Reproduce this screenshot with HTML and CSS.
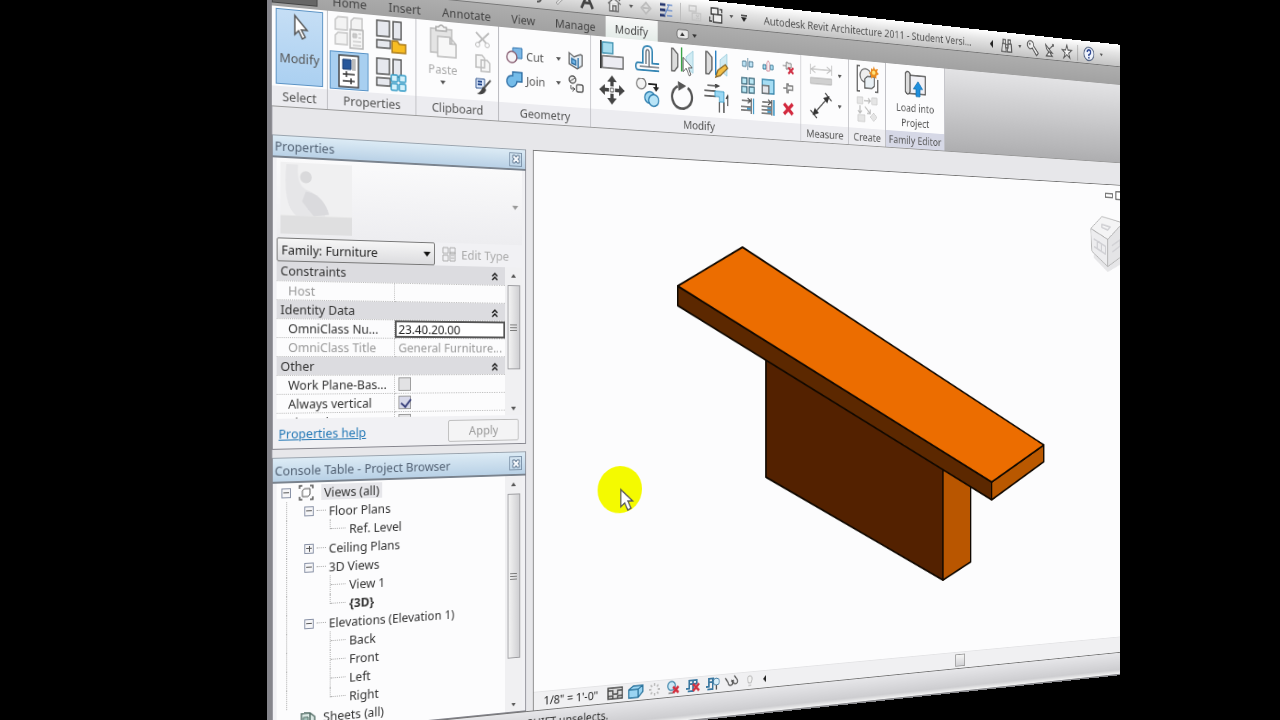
FILE: index.html
```html
<!DOCTYPE html>
<html lang="en">
<head>
<meta charset="utf-8">
<title>Autodesk Revit Architecture 2011 - Student Version</title>
<link rel="stylesheet" href="styles.css">
</head>
<body>
<main class="frame">
<div class="window">
  <header class="titlebar">
    <nav class="quick" aria-label="Quick access">
      <svg class="i16 wide" viewBox="0 0 16 16"><path d="M2 5h7q5 0 5 4t-5 4M6 1 2 5l4 4" fill="none" stroke="#555" stroke-width="2"/></svg>
      <svg class="i16 wide" viewBox="0 0 16 16"><path d="M2 12 12 2l2 2L4 14z" fill="#ddd" stroke="#999"/></svg>
      <svg class="i20 wide" viewBox="0 0 20 20"><path d="M3 17 10 2l7 15M6 11h8" fill="none" stroke="#444" stroke-width="3"/></svg>
      <svg class="i20" viewBox="0 0 20 20"><path d="M2 9 9 3l9 6M4 8v9h11V8M8 17v-6h4v6M14 2l3 3" fill="#eee" stroke="#666" stroke-width="1.5"/></svg>
      <span class="caret"></span>
      <svg class="i16" viewBox="0 0 16 16"><path d="M8 2l6 6-6 6-6-6zM4 8h8" fill="#ddd" stroke="#bbb" stroke-width="2"/></svg>
      <svg class="i20" viewBox="0 0 20 20"><path d="M2 4h7M2 10h7M2 16h7" stroke="#25366f" stroke-width="3"/><path d="M11 4h7M11 10h7M11 16h7M8 16l6-13" stroke="#6c8fcb" stroke-width="1.5"/></svg>
      <span class="rule"></span>
      <svg class="i20" viewBox="0 0 20 20"><path d="M3 2h9v6H3zM7 10h11v8H7zM12 12l4 4m0-4-4 4" fill="none" stroke="#c2c2c2" stroke-width="1.5"/></svg>
      <svg class="i20" viewBox="0 0 20 20"><path d="M4 2h9v7H4zM7 9h11v9H7zM15 3h3v4M2 12v5h3" fill="#eee" stroke="#333" stroke-width="1.5"/></svg>
      <span class="caret"></span>
      <svg class="i12" viewBox="0 0 12 12"><path d="M2 3h8" stroke="#222" stroke-width="1.500"/><path d="M2 5h8l-4 5z" fill="#222"/></svg>
    </nav>
    <h1 class="doc-title">Autodesk Revit Architecture 2011 - Student Versi...</h1>
    <div class="info">
      <svg class="i12" viewBox="0 0 12 12"><path d="M8 1v10L3 6z" fill="#222"/></svg>
      <svg class="i20" viewBox="0 0 20 20"><path d="M4 3h4v5H4zM12 3h4v5h-4zM3 8h5l1 10H2zM12 8h5l1 10h-7zM8 9h4v4H8z" fill="#ddd" stroke="#555" stroke-width="1.5"/></svg>
      <span class="caret"></span>
      <svg class="i20" viewBox="0 0 20 20"><path d="M9 10a5 5 0 1 1 2-3l8 9-3 3z" fill="#eee" stroke="#555" stroke-width="1.5"/><circle cx="5" cy="5" r="1.5" fill="#777"/></svg>
      <svg class="i20" viewBox="0 0 20 20"><path d="M3 4q1 9 11 10zM8 13l-4 5h10l-4-4M9 9l6-5" fill="#eee" stroke="#555" stroke-width="1.5"/><circle cx="15" cy="4" r="2" fill="#666"/></svg>
      <svg class="i20" viewBox="0 0 20 20"><path d="m10 2 2 6h6l-5 4 2 6-5-4-5 4 2-6-5-4h6z" fill="#f4f4f4" stroke="#555" stroke-width="1.5"/></svg>
      <span class="rule dark"></span>
      <svg class="i20" viewBox="0 0 20 20"><circle cx="10" cy="10" r="8.500" fill="#eef2fb" stroke="#51617f" stroke-width="1.5"/><path d="M7 8q0-3 3-3t3 3q0 2-3 3v2M10 14v2" fill="none" stroke="#2a4593" stroke-width="2"/></svg>
      <span class="caret"></span>
    </div>
  </header>

  <nav class="tabs" aria-label="Ribbon tabs">
    <button class="app-button" aria-label="Application menu"></button>
    <button class="tab">Home</button>
    <button class="tab">Insert</button>
    <button class="tab">Annotate</button>
    <button class="tab">View</button>
    <button class="tab">Manage</button>
    <button class="tab active">Modify</button>
    <svg class="ribbon-toggle" viewBox="0 0 28 12"><rect x="1" y="1" width="15" height="10" rx="3" fill="#e8e8e8" stroke="#666"/><path d="M5 8h6L8 4z" fill="#333"/><path d="M21 5h6l-3 4z" fill="#333"/></svg>
  </nav>

  <section class="ribbon">
    <div class="panel select">
      <div class="tools"><button class="modify-button">
        <svg class="i32" viewBox="0 0 32 32"><path d="M11 5v19l4-4 4 8 3-2-4-7h6z" fill="#fff" stroke="#555" stroke-width="1.5"/></svg>
        <span>Modify</span></button></div>
      <h2>Select</h2>
    </div>
    <div class="panel properties">
      <div class="tools grid2">
        <button class="tool"><svg class="i36" viewBox="0 0 36 36"><path d="M3 5l3-3h10v13H3zM20 5l3-3h9v12H20zM3 21l3-3h10v12H3z" fill="#f3f3f3" stroke="#c5c5c5" stroke-width="1.5"/><path d="M19 14h14v19H19z" fill="#f5f5f5" stroke="#b5b5b5" stroke-width="1.5"/><path d="M22 18h4v4h-4zM28 18h3M28 22h3M22 26h9M22 30h9" stroke="#bbb" fill="#ccc"/></svg></button>
        <button class="tool"><svg class="i36" viewBox="0 0 36 36"><path d="M2 2h14v16H2zM20 2h9v18h-9zM2 22h15v8H2z" fill="#e6e8ee" stroke="#555" stroke-width="1.500"/><path d="M19 22h6l2 3h7v9H19z" fill="#f8bd22" stroke="#a9791a" stroke-width="1.5"/></svg></button>
        <button class="tool on"><svg class="i36" viewBox="0 0 36 36"><rect x="7" y="2" width="21" height="32" fill="#fff" stroke="#444" stroke-width="1.500"/><path d="M11 6h9v10h-9z" fill="#26569a" stroke="#173b70"/><path d="M21 5h4v12h-4z" fill="#bbb"/><path d="M11 21h13M11 28h13M15 18v6M20 25v6" stroke="#333" stroke-width="1.500"/></svg></button>
        <button class="tool"><svg class="i36" viewBox="0 0 36 36"><path d="M2 2h14v16H2zM20 2h9v18h-9zM2 22h15v8H2z" fill="#e6e8ee" stroke="#555" stroke-width="1.500"/><rect x="18" y="18" width="7" height="7" rx="1" fill="#d4f1fb" stroke="#3199c5" stroke-width="1.500"/><rect x="27" y="18" width="7" height="7" rx="1" fill="#d4f1fb" stroke="#3199c5" stroke-width="1.500"/><rect x="18" y="27" width="7" height="7" rx="1" fill="#d4f1fb" stroke="#3199c5" stroke-width="1.500"/><rect x="27" y="27" width="7" height="7" rx="1" fill="#d4f1fb" stroke="#3199c5" stroke-width="1.500"/></svg></button>
      </div>
      <h2>Properties</h2>
    </div>
    <div class="panel clipboard">
      <div class="tools split">
        <button class="big faded"><svg class="i36" viewBox="0 0 36 36"><path d="M4 6h24v25H4z" fill="#e4e4e4" stroke="#bbb" stroke-width="1.500"/><path d="M10 8V4h3q3-4 6 0h3v4z" fill="#f4f4f4" stroke="#aaa" stroke-width="1.500"/><path d="M12 14h14l7 7v14H12zM26 14v7h7" fill="#f7f7f7" stroke="#bbb" stroke-width="1.500"/></svg><span>Paste</span><span class="caret"></span></button>
        <div class="stack">
          <svg class="i20" viewBox="0 0 20 20"><path d="m2 3 12 11M17 3 5 14" stroke="#bbb" stroke-width="2"/><circle cx="4" cy="16" r="2.500" fill="none" stroke="#bbb"/><circle cx="15" cy="16" r="2.500" fill="none" stroke="#bbb"/></svg>
          <svg class="i20" viewBox="0 0 20 20"><path d="M2 2h7l3 3v10H2zM8 7h7l3 3v9H8z" fill="#f7f7f7" stroke="#bbb" stroke-width="1.500"/></svg>
          <svg class="i20" viewBox="0 0 20 20"><path d="M2 2h10v10H2z" fill="#dce8fa" stroke="#31548d"/><path d="M4 5h5M4 8h5" stroke="#23478c" stroke-width="2"/><path d="m19 3-8 9" stroke="#555" stroke-width="2"/><path d="m10 10 4 3q-2 7-11 5 5-2 7-8z" fill="#444"/></svg>
        </div>
      </div>
      <h2>Clipboard</h2>
    </div>
    <div class="panel geometry">
      <div class="tools geo">
        <button class="inline"><svg class="i20" viewBox="0 0 20 20"><path d="M8 2h11v11H8z" fill="#7db8e6" stroke="#3374ad"/><circle cx="7" cy="12" r="6" fill="#f7f4f7" stroke="#885e72" stroke-width="1.500"/></svg>Cut<span class="caret"></span></button>
        <svg class="i20" viewBox="0 0 20 20"><path d="M2 2l6 4 8-3 2 1v11l-6 4-10-5z" fill="#e4edf4" stroke="#666" stroke-width="1.500"/><path d="M5 8l5 2v5l-5-2zM13 7v11" fill="#70b5e7" stroke="#2e6fa3" stroke-width="1.500"/></svg>
        <button class="inline"><svg class="i20" viewBox="0 0 20 20"><path d="M8 2h11v10h-6a6 6 0 1 1-7-6h2z" fill="#75bce9" stroke="#2d6ca3" stroke-width="1.500"/></svg>Join<span class="caret"></span></button>
        <svg class="i20" viewBox="0 0 20 20"><circle cx="6" cy="5" r="4" fill="#eee" stroke="#555" stroke-width="1.500"/><path d="m3 7 6-4M4 11v4h4M6 13l3 2-3 3" fill="none" stroke="#444"/><rect x="11" y="10" width="8" height="8" rx="2" fill="#f5f5f5" stroke="#555" stroke-width="1.500"/></svg>
      </div>
      <h2>Geometry</h2>
    </div>
    <div class="panel modify">
      <div class="tools mod">
        <div class="big-grid">
          <svg class="i32" viewBox="0 0 32 32"><path d="M2 0v31" stroke="#333" stroke-width="2"/><path d="M4 2h13v12H4z" fill="#a7dcee" stroke="#3b8eae" stroke-width="1.500"/><path d="M4 17h26v13H4z" fill="#ececf2" stroke="#666" stroke-width="1.500"/></svg>
          <svg class="i32" viewBox="0 0 32 32"><path d="M31 29H4q-3 0-3-4t3-4h6V8q0-6 6-6t6 6v13h9" fill="none" stroke="#3586b4" stroke-width="2"/><path d="M31 25H6M14 22V9q0-3 2-3t2 3v16" fill="none" stroke="#6a7078" stroke-width="1.500"/></svg>
          <svg class="i32" viewBox="0 0 32 32"><path d="M2 2h2l6 6v14l-4 5H2z" fill="#ddd" stroke="#555" stroke-width="1.500"/><path d="M15 0v27" stroke="#3aa447" stroke-width="2"/><path d="m30 3-9 7v12l9 6z" fill="#d0ebf3" stroke="#9dcddd"/><path d="M17 11v16l4-4 4 8 2-1-3-8h5z" fill="#fff" stroke="#444"/></svg>
          <svg class="i32" viewBox="0 0 32 32"><path d="M2 2h2l6 6v14l-4 5H2z" fill="#ddd" stroke="#555" stroke-width="1.500"/><path d="M15 0v28" stroke="#2b81c2" stroke-width="2"/><path d="m30 3-9 7v12l9 6z" fill="#d0ebf3" stroke="#9dcddd"/><path d="m15 30 3-8 10-7 3 4-10 9z" fill="#f4bf45" stroke="#8a692a" stroke-width="1.500"/></svg>
          <svg class="i32" viewBox="0 0 32 32"><path d="M16 0l6 7h-4v5h-4V7h-4zM16 32l6-7h-4v-5h-4v5h-4zM0 16l7-6v4h5v4H7v4zM32 16l-7-6v4h-5v4h5v4z" fill="#444"/><path d="M14 14h4v4h-4z" fill="#fff" stroke="#444"/></svg>
          <svg class="i32" viewBox="0 0 32 32"><circle cx="8" cy="6" r="6" fill="#f3f3f3" stroke="#777" stroke-width="1.500"/><path d="M17 6h10v4" stroke="#222" stroke-width="2" fill="none"/><path d="M23 9h8l-4 5z" fill="#222"/><circle cx="19" cy="21" r="6.500" fill="#a0d8f2" stroke="#2a7cae" stroke-width="1.500"/><circle cx="24" cy="24" r="6.500" fill="#b9e4f7" stroke="#2a7cae" stroke-width="1.500"/></svg>
          <svg class="i32" viewBox="0 0 32 32"><path d="M23 7a13 13 0 1 1-13-1" fill="none" stroke="#555" stroke-width="3"/><path d="M10 0l11 5-10 6z" fill="#555"/></svg>
          <svg class="i32" viewBox="0 0 32 32"><path d="M4 2h15M14 0l5 2-5 2M31 12v12M29 16l2-4 2 4" fill="none" stroke="#444" stroke-width="1.500"/><path d="M0 8h15M0 14h15M20 20v12M26 20v12" stroke="#666" stroke-width="2"/><path d="M14 8h12v12h-6v-6h-6z" fill="#9bd8f4" stroke="#3c9ac3"/></svg>
        </div>
        <div class="small-grid">
          <svg class="i16" viewBox="0 0 16 16"><path d="M1 5h5v6H1zM10 5h5v6h-5zM8 1v14" fill="#bfe4f5" stroke="#45738d"/></svg>
          <svg class="i16" viewBox="0 0 16 16"><path d="M1 7h4v5H1zM11 7h4v5h-4z" fill="#aee0f5" stroke="#2f718e"/><path d="M6 5l2-3 2 3v9H6z" fill="#faecef" stroke="#cc8795"/></svg>
          <svg class="i16" viewBox="0 0 16 16"><path d="M0 6h5M5 2v8h2V8h5V3H7V2z" fill="#eee" stroke="#777"/><path d="m8 8 7 7m0-7-7 7" stroke="#d03246" stroke-width="2.500"/></svg>
          <svg class="i20" viewBox="0 0 20 20"><path d="M2 2h7v7H2zM12 2h7v7h-7zM2 12h7v7H2zM12 12h7v7h-7z" fill="#b9e6f3" stroke="#416d80" stroke-width="1.500"/></svg>
          <svg class="i20" viewBox="0 0 20 20"><path d="M2 2h16v16H2z" fill="#a5ddf4" stroke="#3582a9" stroke-width="1.500"/><path d="M2 9h9v9H2z" fill="#e5e7ec" stroke="#666" stroke-width="1.500"/></svg>
          <svg class="i16" viewBox="0 0 16 16"><path d="M1 8h5M6 3v10h2v-3h6V5H8V3z" fill="#eee" stroke="#777" stroke-width="1.500"/></svg>
          <svg class="i20" viewBox="0 0 20 20"><path d="M2 4h12M10 1l4 3-4 3M1 11h13M1 15h13M15 1v18" fill="none" stroke="#555" stroke-width="1.500"/><path d="M9 13h5M18 1v18" stroke="#4a9dca" stroke-width="2"/></svg>
          <svg class="i20" viewBox="0 0 20 20"><path d="M2 4h12M10 1l4 3-4 3M1 9h13M1 13h13M1 17h13M15 1v18" fill="none" stroke="#555" stroke-width="1.500"/><path d="M9 11h5M9 15h5M18 1v18" stroke="#4a9dca" stroke-width="2"/></svg>
          <svg class="i16" viewBox="0 0 16 16"><path d="m2 2 12 12M14 2 2 14" stroke="#d32a3f" stroke-width="4"/></svg>
        </div>
      </div>
      <h2>Modify</h2>
    </div>
    <div class="panel measure">
      <div class="tools column">
        <div class="with-caret"><svg class="i32" viewBox="0 0 32 32"><path d="M1 4v12M31 4v12M2 10h28M8 6l-6 4 6 4M24 6l6 4-6 4" fill="none" stroke="#c4c4c4" stroke-width="1.500"/><path d="M1 20h30v7H1z" fill="#d0d0d0" stroke="#b5b5b5"/></svg><span class="caret"></span></div>
        <div class="with-caret"><svg class="i32" viewBox="0 0 32 32"><path d="M6 26 26 6M1 22l9 9M22 1l9 9" stroke="#444" stroke-width="1.500"/><path d="m4 28 3-9 6 6zM28 4l-3 9-6-6z" fill="#333"/></svg><span class="caret"></span></div>
      </div>
      <h2>Measure</h2>
    </div>
    <div class="panel create">
      <div class="tools column">
        <svg class="i32" viewBox="0 0 32 32"><path d="M5 1H1v30h4M27 31h4V16" fill="none" stroke="#444" stroke-width="1.500"/><circle cx="13" cy="12" r="8" fill="#eee" stroke="#666" stroke-width="1.500"/><path d="M12 16l4-3h10v11l-4 3H12z" fill="#e9f0f5" stroke="#555" stroke-width="1.500"/><path d="m25 0 2 4 4-1-1 4 3 2-4 2v4l-4-2-4 2v-4l-3-2 3-2V3l3 1z" fill="#e98b20"/><circle cx="25" cy="8" r="2.500" fill="#ffe37a"/></svg>
        <svg class="i32" viewBox="0 0 32 32"><path d="M1 2h8v8H1zM22 2h8v8h-8zM2 23h10v8H2zM20 25l5-5 5 5-5 5z" fill="#e5e5e5" stroke="#cdcdcd"/><path d="M11 6h9M17 3l3 3-3 3M5 12v9M2 18l3 3 3-3M12 13l8 8M20 16v5h-5" fill="none" stroke="#bbb" stroke-width="1.500"/></svg>
      </div>
      <h2>Create</h2>
    </div>
    <div class="panel family">
      <div class="tools"><button class="big load"><svg class="i32" viewBox="0 0 32 32"><path d="M8 6h23v22H5" fill="#f1f1f6" stroke="#444" stroke-width="1.500"/><path d="M1 4q3-5 7 0v22q-3 6-7 0z" fill="#ddd" stroke="#444" stroke-width="1.500"/><path d="m20 13 7 9h-4v9h-6v-9h-4z" fill="#1f8fdd" stroke="#1570b0"/></svg><span>Load into<br>Project</span></button></div>
      <h2>Family Editor</h2>
    </div>
  </section>

  <div class="workspace">
    <aside class="docks">
      <section class="palette">
        <header class="palette-title"><h2>Properties</h2><button class="close" aria-label="Close Properties"><svg viewBox="0 0 12 12"><path d="M2 2h3l1 2 1-2h3v3L8 6l2 1v3H7L6 8l-1 2H2V7l2-1-2-1z" fill="#f5f8fc" stroke="#58718b"/></svg></button></header>
        <div class="palette-body">
          <div class="preview">
            <svg viewBox="0 0 74 70"><path d="M0 0h74v70H0z" fill="#f0f0f1"/><path d="M6 2q-4 40 10 50h30q0-20-20-26-10-4-8-24z" fill="#e6e6e8"/><circle cx="26" cy="14" r="6" fill="#d9d9db"/><path d="M26 28q18 2 24 22l-16 2-12-14z" fill="#dadadd"/><path d="M0 52h74v18H0z" fill="#dfdfe0"/></svg>
            <span class="caret"></span>
          </div>
          <div class="type-row">
            <label class="combo"><select aria-label="Family"><option>Family: Furniture</option></select><span class="caret"></span></label>
            <button class="edit-type"><svg class="i16" viewBox="0 0 16 16"><path d="M1 1h6v6H1zM9 1h6v6H9zM1 9h6v6H1zM9 6h6v9H9zM10 9h4M10 12h4" fill="none" stroke="#aaa"/></svg>Edit Type</button>
          </div>
          <div class="prop-scroll">
            <table class="props">
              <tr class="group"><th colspan="2">Constraints<svg class="chev" viewBox="0 0 8 10"><path d="m1 5 3-3 3 3M1 9l3-3 3 3" fill="none" stroke="#111" stroke-width="1.500"/></svg></th></tr>
              <tr class="dim"><td>Host</td><td></td></tr>
              <tr class="group"><th colspan="2">Identity Data<svg class="chev" viewBox="0 0 8 10"><path d="m1 5 3-3 3 3M1 9l3-3 3 3" fill="none" stroke="#111" stroke-width="1.500"/></svg></th></tr>
              <tr><td><label for="omni">OmniClass Nu...</label></td><td class="field"><input id="omni" type="text" value="23.40.20.00"></td></tr>
              <tr class="dim"><td>OmniClass Title</td><td>General Furniture...</td></tr>
              <tr class="group"><th colspan="2">Other<svg class="chev" viewBox="0 0 8 10"><path d="m1 5 3-3 3 3M1 9l3-3 3 3" fill="none" stroke="#111" stroke-width="1.500"/></svg></th></tr>
              <tr><td><label for="wp">Work Plane-Bas...</label></td><td><input id="wp" type="checkbox"></td></tr>
              <tr><td><label for="av">Always vertical</label></td><td><input id="av" type="checkbox" checked></td></tr>
              <tr><td><label for="sh">Shared</label></td><td><input id="sh" type="checkbox"></td></tr>
            </table>
            <div class="scrollbar"><span class="caret up"></span><span class="thumb props-thumb"></span><span class="caret"></span></div>
          </div>
          <footer class="palette-foot"><a href="#help">Properties help</a><button class="apply">Apply</button></footer>
        </div>
      </section>

      <section class="palette browser">
        <header class="palette-title"><h2>Console Table - Project Browser</h2><button class="close" aria-label="Close Project Browser"><svg viewBox="0 0 12 12"><path d="M2 2h3l1 2 1-2h3v3L8 6l2 1v3H7L6 8l-1 2H2V7l2-1-2-1z" fill="#f5f8fc" stroke="#58718b"/></svg></button></header>
        <div class="tree-wrap">
          <ul class="tree">
            <li class="l0"><i class="box minus"></i><svg class="i16" viewBox="0 0 16 16"><path d="M1 4V1h3M12 1h3v3M15 12v3h-3M4 15H1v-3" fill="none" stroke="#555" stroke-width="1.500"/><path d="M4 6l2-2h6v6l-2 2H4z" fill="#fff" stroke="#555"/></svg><span class="picked">Views (all)</span></li>
            <li class="l1"><i class="box minus"></i><i class="dash"></i>Floor Plans</li>
            <li class="l2 last"><i class="dash"></i>Ref. Level</li>
            <li class="l1"><i class="box plus"></i><i class="dash"></i>Ceiling Plans</li>
            <li class="l1"><i class="box minus"></i><i class="dash"></i>3D Views</li>
            <li class="l2"><i class="dash"></i>View 1</li>
            <li class="l2 last"><i class="dash"></i><b>{3D}</b></li>
            <li class="l1"><i class="box minus"></i><i class="dash"></i>Elevations (Elevation 1)</li>
            <li class="l2"><i class="dash"></i>Back</li>
            <li class="l2"><i class="dash"></i>Front</li>
            <li class="l2"><i class="dash"></i>Left</li>
            <li class="l2 last"><i class="dash"></i>Right</li>
            <li class="l0 sheets"><svg class="i16" viewBox="0 0 16 16"><path d="M1 3h9l5 4v8H1zM10 3v12" fill="#dce9e5" stroke="#567069" stroke-width="1.500"/><path d="M3 7h5v5H3z" fill="#a6c5be" stroke="#567069"/></svg>Sheets (all)</li>
          </ul>
          <div class="scrollbar"><span class="caret up"></span><span class="thumb tree-thumb"></span><span class="caret"></span></div>
        </div>
      </section>
    </aside>

    <section class="view">
      <div class="canvas">
        <svg class="model" viewBox="0 0 860 580" aria-label="Console table, 3D view">
          <g stroke="#100800" stroke-width="2" stroke-linejoin="round">
            <path d="M298 224v136l257 133V350z" fill="#532100"/>
            <path d="M555 350v143l43-20V370z" fill="#b95600"/>
            <path d="M180 142v22l451 234v-22z" fill="#5c2800"/>
            <path d="M631 376v22l84-45v-21z" fill="#b95800"/>
            <path d="M266 96 180 142l451 234 84-44z" fill="#ec6d00"/>
          </g>
          <g stroke="#aaa" stroke-width="1" stroke-linejoin="round">
            <path d="M798 94l24 18 30-14v-8h-54z" fill="#e6e6e8" stroke="none"/>
            <path d="M793 57l19-16 36 7-26 22z" fill="#f4f4f5"/>
            <path d="M793 57l29 13v35l-27-19z" fill="#ededef"/>
            <path d="M822 70l26-22v42l-26 15z" fill="#e4e4e6"/>
            <path d="M798 70l20 9v10l-19-9M804 73v9M811 76v9M829 78l14-8v8l-13 8M812 51l14 3-4 4-10-3z" fill="none" stroke="#d0d0d4" stroke-width="2"/>
          </g>
          <path d="M818 11h12v5h-12zM836 8h12v10h-12z" fill="#fff" stroke="#555" stroke-width="1.500"/>
          <ellipse cx="106" cy="368" rx="28" ry="26" fill="#f4fa00"/>
          <path d="M107 368v19l5-4 4 8 4-2-4-8h6z" fill="#fff" stroke="#555" stroke-width="1.500"/>
        </svg>
      </div>
      <footer class="viewbar">
        <span class="scale">1/8" = 1'-0"</span>
        <svg class="i20" viewBox="0 0 20 16"><path d="M1 2h18v12H1z" fill="#ddd" stroke="#444" stroke-width="1.500"/><path d="M1 5h6v4h6V5h6M1 11h6v3M19 11h-6v3" fill="none" stroke="#444" stroke-width="1.500"/></svg>
        <svg class="i20" viewBox="0 0 20 16"><path d="M1 6l6-4h12v7l-6 6H1zM1 6h12v9M13 6l6-4" fill="#9ad4f2" stroke="#28729c" stroke-width="1.500"/></svg>
        <svg class="i16" viewBox="0 0 16 16"><path d="M8 1v3M8 12v3M1 8h3M12 8h3M3 3l2 2M11 11l2 2M13 3l-2 2M3 13l2-2" stroke="#bbb" stroke-width="2"/></svg>
        <svg class="i20" viewBox="0 0 20 16"><circle cx="8" cy="6" r="5" fill="#cde9f7" stroke="#3a82a8" stroke-width="1.500"/><path d="M4 14h6" stroke="#444"/><path d="m10 7 7 7m0-7-7 7" stroke="#d2303f" stroke-width="3"/></svg>
        <svg class="i20" viewBox="0 0 20 16"><path d="M1 11h4V2h10v4M5 6h10M3 14h7V3" fill="none" stroke="#3977a0" stroke-width="2"/><path d="m10 6 8 8m0-8-8 8" stroke="#d2303f" stroke-width="3"/></svg>
        <svg class="i20" viewBox="0 0 20 16"><path d="M1 11h4V2h7M5 6h10M3 14h7V3" fill="none" stroke="#3977a0" stroke-width="2"/><circle cx="15" cy="6" r="4" fill="#d7eefa" stroke="#3977a0"/><path d="M15 10v5" stroke="#555" stroke-width="2"/></svg>
        <svg class="i20" viewBox="0 0 20 16"><path d="M1 3l4 6a3 3 0 1 0 4-3M9 8l3-2a3 3 0 1 0 4-1l-3-4" fill="none" stroke="#555" stroke-width="1.500"/></svg>
        <svg class="i16" viewBox="0 0 16 16"><path d="M6 11q-3-8 2-8t2 8zM6 14h4" fill="#f2f2f2" stroke="#aaa"/></svg>
        <svg class="i12" viewBox="0 0 12 12"><path d="M8 2v8L4 6z" fill="#222"/></svg>
        <span class="hscroll"><span class="hthumb"></span></span>
      </footer>
    </section>
  </div>

  <footer class="status">SHIFT unselects.</footer>
</div>
</main>
</body>
</html>
```
FILE: styles.css
```css
* { box-sizing: border-box; }
body { margin: 0; background: #000; font-family: "Noto Sans", "Open Sans", sans-serif; font-size: 13px; line-height: 16px; color: #333; }
h1, h2 { margin: 0; font-size: 13px; font-weight: 400; }
button { margin: 0; padding: 0; border: 0; background: none; font: inherit; color: inherit; }
svg { display: block; flex: none; }

/* 4:3 stage with the application window turned away from the viewer */
.frame { height: 100vh; aspect-ratio: 4 / 3; margin: 0 auto; overflow: hidden; background: #000; display: flex; align-items: center; padding-left: 107px; }
.window { flex: none; width: 155%; height: 113vh; display: flex; flex-direction: column; transform-origin: left center; transform: perspective(1014px) rotateY(15deg); background: #e7e7ea; border-left: 5px solid #85858b; box-shadow: inset 1px 0 #c2c2c8; }

.i12 { width: 12px; height: 12px; }
.i16 { width: 16px; height: 16px; }
.i20 { width: 20px; height: 20px; }
.i32 { width: 32px; height: 32px; }
.i36 { width: 36px; height: 36px; }
.caret { flex: none; width: 6px; height: 4px; background: #555; clip-path: polygon(0 0, 100% 0, 50% 100%); }
.caret.up { clip-path: polygon(50% 0, 100% 100%, 0 100%); }
.rule { width: 1px; height: 20px; background: #bbb; }
.rule.dark { background: #555; }

.titlebar { flex: none; height: 29px; display: flex; align-items: center; padding-top: 3px; background: linear-gradient(#fff, #e4e4e4 40%, #c4c4c4); border-bottom: 1px solid #777; }
.quick { flex: none; display: flex; align-items: center; gap: 8px; padding-left: 287px; width: 587px; }
.quick .wide { margin-right: 6px; }
.doc-title { flex: none; width: 330px; color: #555; white-space: nowrap; }
.info { display: flex; align-items: center; gap: 8px; }

.tabs { flex: none; height: 23px; display: flex; align-items: stretch; background: linear-gradient(#adadad, #a2a2a2); color: #444; }
.app-button { width: 48px; height: 20px; background: #666; border: 1px solid #444; border-top: 0; margin-right: 4px; }
.tab { padding: 2px 12px 0; }
.tab.active { background: linear-gradient(#f8f8f8, #e4ece8); }
.ribbon-toggle { width: 28px; height: 12px; align-self: center; margin-left: 24px; }

.ribbon { flex: none; height: 101px; display: flex; color: #555; background: linear-gradient(#e3e3e5, #aeaeb0); border-bottom: 1px solid #999; }
.panel { flex: none; display: flex; flex-direction: column; background: #fcfcfd; border-right: 1px solid #bdbdc2; }
.panel h2 { height: 20px; line-height: 20px; text-align: center; background: #ececf0; white-space: nowrap; }
.tools { flex: 1; padding: 2px 4px; }
.select { width: 59px; }
.properties { width: 97px; }
.clipboard { width: 95px; }
.geometry { width: 111px; }
.modify { width: 277px; }
.measure { width: 68px; }
.create { width: 54px; }
.family { width: 89px; }
.family h2 { background: #d6d8e6; }
.modify-button { width: 100%; height: 100%; display: flex; flex-direction: column; align-items: center; gap: 8px; background: linear-gradient(#c5def5, #abd0f1); border: 1px solid #5c93c4; }
.grid2 { display: grid; grid-template-columns: 42px 42px; gap: 0 4px; padding: 1px 2px; }
.tool { display: grid; place-items: center; height: 39px; }
.tool.on { background: #a8cff0; border: 1px solid #5792c6; }
.split { display: flex; justify-content: space-between; padding: 2px 8px 2px 12px; }
.big { display: flex; flex-direction: column; align-items: center; gap: 4px; }
.faded { color: #aaa; }
.stack { display: flex; flex-direction: column; justify-content: space-around; }
.geo { display: grid; grid-template-columns: 1fr 20px; grid-auto-rows: 24px; align-content: center; align-items: center; gap: 2px 8px; padding: 6px 8px 2px; }
.inline { display: flex; align-items: center; gap: 4px; }
.inline .caret { margin-left: auto; }
.mod { display: flex; gap: 16px; padding: 4px 8px; }
.big-grid { display: grid; grid-template-columns: repeat(4, 32px); grid-auto-rows: 32px; gap: 6px 13px; align-content: start; padding-left: 2px; }
.small-grid { display: grid; grid-template-columns: repeat(3, 20px); grid-auto-rows: 24px; gap: 0 8px; place-items: center; align-content: start; }
.column { display: flex; flex-direction: column; align-items: center; gap: 4px; padding-top: 5px; }
.with-caret { display: flex; align-items: center; gap: 8px; padding-left: 2px; }
.load { width: 100%; line-height: 18px; padding-top: 4px; gap: 4px; }

.workspace { flex: 1; min-height: 0; display: flex; gap: 8px; padding-top: 28px; }
.docks { flex: none; width: 283px; display: flex; flex-direction: column; gap: 8px; }
.palette { display: flex; flex-direction: column; border: 1px solid #85858d; border-top-color: #9aa4ae; background: #f1f1f4; padding: 0 4px; }
.palette-title { height: 22px; display: flex; align-items: center; justify-content: space-between; margin: 0 -4px; padding: 0 4px 0 2px; background: linear-gradient(#dcebf5, #b9d1e6); color: #536274; border-bottom: 2px solid #7a838e; }
.close { width: 15px; height: 15px; border: 1px solid #7d93a9; display: grid; place-items: center; }
.close svg { width: 12px; height: 12px; }
.preview { height: 80px; display: flex; align-items: center; justify-content: space-between; padding: 2px 4px; background: linear-gradient(#fafafb, #ededf0); }
.preview svg { width: 76px; height: 72px; }
.preview .caret { background: #999; width: 8px; height: 5px; }
.type-row { display: flex; align-items: center; gap: 8px; height: 24px; }
.combo { position: relative; flex: none; width: 172px; }
.combo select { appearance: none; display: block; width: 100%; height: 24px; padding: 0 4px; font: inherit; color: #222; border: 1px solid #777; border-radius: 2px; background: linear-gradient(#f6f6f6, #dcdcdf); }
.combo .caret { position: absolute; right: 5px; top: 10px; width: 8px; height: 5px; background: #111; }
.edit-type { display: flex; align-items: center; gap: 6px; color: #aaa; white-space: nowrap; }
.prop-scroll { height: 158px; overflow: hidden; display: flex; background: #fcfcfd; }
.props { flex: 1; align-self: flex-start; border-collapse: collapse; table-layout: fixed; width: 100%; }
.props td, .props th { height: 19px; padding: 0 0 0 4px; line-height: 18px; text-align: left; font-weight: 400; border-bottom: 1px dotted #bbb; white-space: nowrap; overflow: hidden; }
.props td:first-child { padding-left: 12px; border-right: 1px dotted #bbb; width: 125px; }
.props .group th { background: #dcdce0; color: #333; }
.chev { float: right; width: 8px; height: 10px; margin: 5px 8px 0 0; }
.dim { color: #999; }
.props .field { padding: 0; }
.field input { display: block; width: 100%; height: 18px; padding: 0 2px; font: inherit; color: #222; background: #fff; border: 2px solid #555; }
.props input[type="checkbox"] { appearance: none; display: block; position: relative; width: 14px; height: 14px; margin: 0; border: 1px solid #999; background: #e2e2e4; }
.props input[type="checkbox"]:checked { background: #d8d9ea; }
.props input[type="checkbox"]:checked::after { content: ""; position: absolute; left: 4px; top: 0; width: 5px; height: 9px; border: solid #39407c; border-width: 0 2px 2px 0; transform: rotate(40deg); }
.scrollbar { flex: none; width: 20px; display: flex; flex-direction: column; align-items: center; justify-content: space-between; gap: 8px; padding: 7px 0 5px; background: #f0f0f2; }
.thumb { width: 15px; border: 1px solid #9a9a9e; background: linear-gradient(90deg, #f3f3f3, #cfcfd2); display: grid; place-items: center; }
.thumb::after { content: ""; width: 8px; height: 7px; background: repeating-linear-gradient(#777 0 1px, transparent 1px 3px); }
.props-thumb { height: 90px; margin-bottom: auto; }
.tree-thumb { height: 176px; margin-bottom: auto; }
.palette-foot { display: flex; align-items: center; justify-content: space-between; height: 30px; padding: 0 4px 0 2px; }
.palette-foot a { color: #2277b5; }
.apply { width: 82px; height: 23px; border: 1px solid #bbb; border-radius: 2px; background: #f4f4f5; color: #999; }

.browser { flex: 1; min-height: 0; }
.browser .palette-title { height: 25px; }
.tree-wrap { flex: 1; min-height: 0; display: flex; background: #fcfcfd; overflow: hidden; }
.tree { flex: 1; list-style: none; margin: 0; padding: 0 0 0 5px; }
.tree li { display: flex; align-items: center; height: 19px; white-space: nowrap; }
.tree .l0 { gap: 8px; }
.tree .l1 { margin-left: 5px; padding-left: 18px; border-left: 1px dotted #aaa; gap: 3px; }
.tree .l2 { margin-left: 5px; padding-left: 46px; border-left: 1px dotted #aaa; gap: 4px; position: relative; }
.tree .l2::before { content: ""; position: absolute; left: 45px; top: 0; height: 100%; border-left: 1px dotted #aaa; }
.tree .l2.last::before { height: 50%; }
.box { flex: none; width: 10px; height: 10px; border: 1px solid #8790a5; background: linear-gradient(#555, #555) center / 6px 1px no-repeat #f6f6f8; }
.box.plus { background: linear-gradient(#555, #555) center / 6px 1px no-repeat, linear-gradient(#555, #555) center / 1px 6px no-repeat, #f6f6f8; }
.dash { flex: none; width: 10px; border-top: 1px dotted #aaa; }
.l2 .dash { width: 16px; }
.picked { padding: 0 3px; background: #e6e6ea; }
.tree .sheets { padding-left: 20px; }

.view { flex: 1; min-width: 0; display: flex; flex-direction: column; border-left: 1px solid #777; border-top: 1px solid #777; background: #fcfcfd; }
.canvas { flex: 1; min-height: 0; overflow: hidden; }
.model { width: 860px; height: 580px; }
.viewbar { flex: none; height: 20px; display: flex; align-items: center; gap: 6px; padding-left: 12px; background: #f0f0f2; border-top: 1px solid #e4e4e6; }
.viewbar .i20 { height: 16px; }
.scale { width: 72px; color: #222; white-space: nowrap; }
.hscroll { flex: 1; display: flex; padding-left: 266px; }
.hthumb { width: 15px; height: 15px; border: 1px solid #999; background: linear-gradient(#f5f5f5, #d2d2d5); }
.status { flex: none; height: 30px; padding: 4px 8px 4px 284px; border-top: 1px solid #777; border-bottom: 2px solid #8c8c90; background: linear-gradient(#e6e6e9, #cdcdd0 80%, #f4f4f4); color: #333; white-space: nowrap; }
```
